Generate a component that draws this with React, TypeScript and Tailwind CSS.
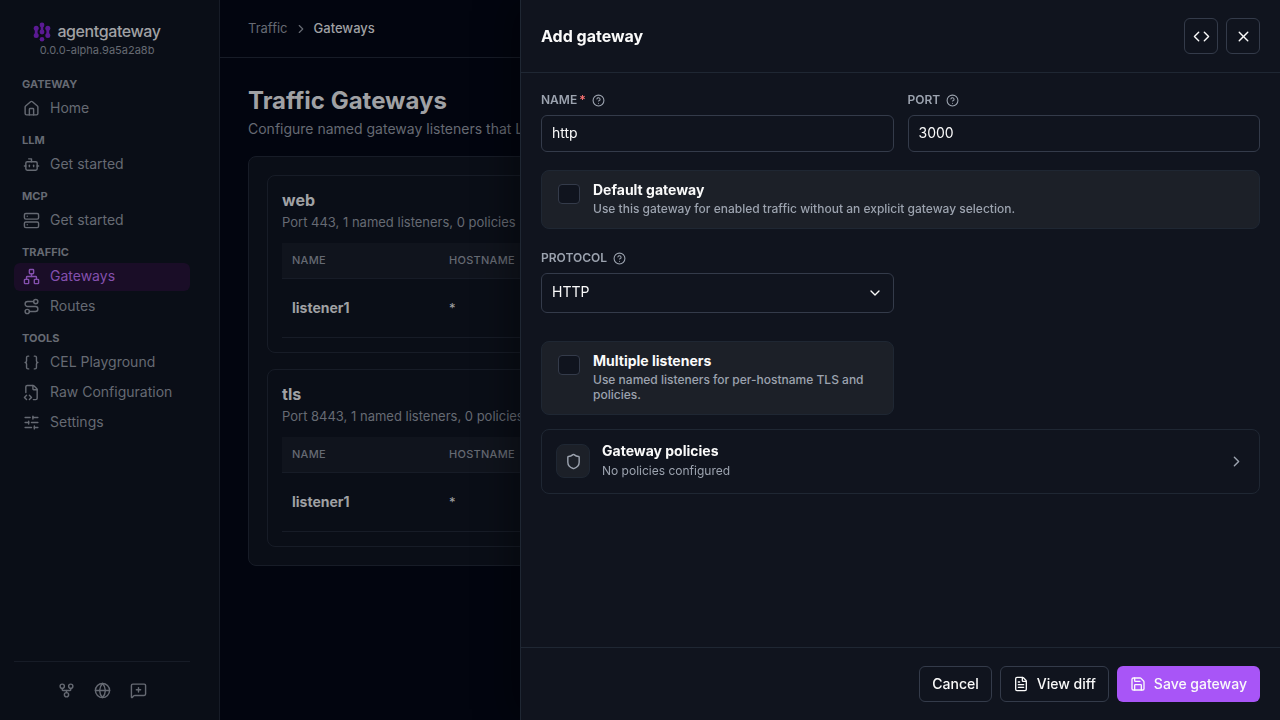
import type { ReactNode } from 'react';
import {
  Bot,
  Braces,
  ChevronDown,
  ChevronRight,
  CircleHelp,
  Code,
  FileCode2,
  FileText,
  GitFork,
  Globe,
  House,
  MessageSquarePlus,
  Network,
  Route,
  Save,
  Server,
  Shield,
  SlidersHorizontal,
  X,
  type LucideIcon,
} from 'lucide-react';

type NavItem = { label: string; icon: LucideIcon; active?: boolean };

const sections: { title: string; items: NavItem[] }[] = [
  { title: 'GATEWAY', items: [{ label: 'Home', icon: House }] },
  { title: 'LLM', items: [{ label: 'Get started', icon: Bot }] },
  { title: 'MCP', items: [{ label: 'Get started', icon: Server }] },
  {
    title: 'TRAFFIC',
    items: [
      { label: 'Gateways', icon: Network, active: true },
      { label: 'Routes', icon: Route },
    ],
  },
  {
    title: 'TOOLS',
    items: [
      { label: 'CEL Playground', icon: Braces },
      { label: 'Raw Configuration', icon: FileCode2 },
      { label: 'Settings', icon: SlidersHorizontal },
    ],
  },
];

const gateways = [
  { name: 'web', summary: 'Port 443, 1 named listeners, 0 policies' },
  { name: 'tls', summary: 'Port 8443, 1 named listeners, 0 policies' },
];

function Logo() {
  return (
    <svg width="18" height="20" viewBox="0 0 18 20" fill="#5b1a94" stroke="#5b1a94" aria-hidden="true">
      <circle cx="3.2" cy="6.2" r="2.5" stroke="none" />
      <circle cx="3.2" cy="13.4" r="2.5" stroke="none" />
      <path d="M3.2 6v7.5" strokeWidth="2.8" />
      <circle cx="9" cy="3" r="2.4" stroke="none" />
      <circle cx="9" cy="10" r="2.4" stroke="none" />
      <path d="M9 3v7" strokeWidth="2.6" />
      <circle cx="14.8" cy="6.2" r="2.5" stroke="none" />
      <circle cx="14.8" cy="13.4" r="2.5" stroke="none" />
      <path d="M14.8 6v7.5" strokeWidth="2.8" />
      <circle cx="9" cy="17.2" r="2.3" stroke="none" />
    </svg>
  );
}

function Sidebar() {
  return (
    <aside className="flex w-[220px] shrink-0 flex-col border-r border-[#171c27] bg-[#0a0e17] pt-5 pr-[29px] pl-3.5">
      <div className="flex flex-col items-center pr-2.5">
        <div className="flex h-6 items-center gap-1.5">
          <Logo />
          <span className="self-start text-base leading-[22px] font-medium tracking-tight text-[#a0a1a4]">
            agentgateway
          </span>
        </div>
        <span className="text-[11px] leading-3 text-[#666a73]">0.0.0-alpha.9a5a2a8b</span>
      </div>
      <nav className="mt-[19px] flex flex-col gap-2">
        {sections.map((section) => (
          <section key={section.title}>
            <h2 className="h-5 px-2 text-[11px] leading-[18px] font-bold text-[#666a73]">{section.title}</h2>
            <div className="flex flex-col gap-0.5">
              {section.items.map((item) => (
                <a
                  key={item.label}
                  href="#"
                  className={
                    item.active
                      ? 'flex h-7 items-center gap-2.5 rounded-md bg-[#1a0d27] px-[9px] pb-0.5 text-sm text-[#8450ae]'
                      : 'flex h-7 items-center gap-2.5 rounded-md px-[9px] pb-0.5 text-sm text-[#666a73]'
                  }
                >
                  <item.icon size={17} />
                  {item.label}
                </a>
              ))}
            </div>
          </section>
        ))}
      </nav>
      <div className="mt-auto flex justify-center gap-[19px] border-t border-[#171c27] pt-5 pb-[21px] text-[#666a73]">
        <a href="#" aria-label="Source"><GitFork size={17} /></a>
        <a href="#" aria-label="Website"><Globe size={17} /></a>
        <a href="#" aria-label="Feedback"><MessageSquarePlus size={17} /></a>
      </div>
    </aside>
  );
}

function GatewayCard({ name, summary }: { name: string; summary: string }) {
  return (
    <article className="rounded-lg border border-[#171c27] p-3.5">
      <h2 className="text-base leading-5 font-bold text-[#a0a1a4]">{name}</h2>
      <p className="mt-0.5 text-[13px] leading-5 text-[#666a73]">{summary}</p>
      <table className="mt-[11px] w-full table-fixed border-separate border-spacing-0 text-left">
        <thead className="bg-[#10141d] text-[11px] tracking-wide text-[#666a73]">
          <tr className="h-9">
            <th className="w-[157px] border-b border-[#171c27] px-2.5 font-medium">NAME</th>
            <th className="border-b border-[#171c27] px-2.5 font-medium">HOSTNAME</th>
          </tr>
        </thead>
        <tbody className="text-sm text-[#a0a1a4]">
          <tr className="h-[59px]">
            <td className="border-b border-[#171c27] px-2.5 font-bold">listener1</td>
            <td className="border-b border-[#171c27] px-2.5 text-[13px]">*</td>
          </tr>
        </tbody>
      </table>
    </article>
  );
}

function FieldLabel({ htmlFor, children, required }: { htmlFor: string; children: string; required?: boolean }) {
  return (
    <div className="flex h-4 items-center gap-1.5 text-[#9ca3af]">
      <label htmlFor={htmlFor} className="text-xs leading-4 font-semibold">
        {children}
        {required && <span className="ml-0.5 text-[#f87171]">*</span>}
      </label>
      <CircleHelp size={13} />
    </div>
  );
}

function CheckCard({ title, children }: { title: string; children: ReactNode }) {
  return (
    <label className="flex items-start gap-[13px] rounded-lg border border-[#1f2733] bg-[#1c2028] px-4 pt-2.5 pb-3">
      <input
        type="checkbox"
        className="mt-[3px] h-5 w-[22px] shrink-0 appearance-none rounded border border-[#343b4a] bg-[#10141e]"
      />
      <span className="flex flex-col gap-0.5">
        <span className="text-sm leading-[18px] font-bold text-[#fafafa]">{title}</span>
        <span className="text-xs leading-[15px] font-medium text-[#9ca3af]">{children}</span>
      </span>
    </label>
  );
}

const outlineButton =
  'flex h-9 items-center justify-center gap-2 rounded-md border border-[#343b4a] text-sm font-medium text-[#fafafa]';
const inputBox = 'w-full rounded-md border border-[#343b4a] bg-[#10141e] px-2.5 text-sm text-[#fafafa]';

function GatewayDrawer() {
  return (
    <div
      role="dialog"
      aria-labelledby="drawer-title"
      className="fixed inset-y-0 right-0 flex w-[760px] max-w-full flex-col border-l border-[#1f2733] bg-[#10141e] shadow-[-12px_0_32px_rgba(0,0,0,0.35)]"
    >
      <header className="flex items-center justify-between border-b border-[#1f2733] px-5 py-[18px]">
        <h2 id="drawer-title" className="text-base font-bold text-[#fafafa]">Add gateway</h2>
        <div className="flex gap-2">
          <button type="button" aria-label="View source" className={`${outlineButton} w-[34px]`}>
            <Code size={17} />
          </button>
          <button type="button" aria-label="Close" className={`${outlineButton} w-[34px]`}>
            <X size={17} />
          </button>
        </div>
      </header>

      <form className="flex-1 overflow-y-auto p-5 pt-[19px]">
        <div className="grid grid-cols-2 gap-x-3.5">
          <div className="flex flex-col gap-[7px]">
            <FieldLabel htmlFor="name" required>NAME</FieldLabel>
            <input id="name" defaultValue="http" className={`${inputBox} h-[37px] pb-0.5`} />
          </div>
          <div className="flex flex-col gap-[7px]">
            <FieldLabel htmlFor="port">PORT</FieldLabel>
            <input id="port" defaultValue="3000" className={`${inputBox} h-[37px] pb-0.5`} />
          </div>
          <div className="col-span-2 mt-[18px]">
            <CheckCard title="Default gateway">
              Use this gateway for enabled traffic without an explicit gateway selection.
            </CheckCard>
          </div>
          <div className="mt-[21px] flex flex-col gap-[7px]">
            <FieldLabel htmlFor="protocol">PROTOCOL</FieldLabel>
            <div className="relative">
              <select id="protocol" className={`${inputBox} h-10 appearance-none pb-0.5`}>
                <option>HTTP</option>
              </select>
              <ChevronDown size={16} className="pointer-events-none absolute top-3 right-[11px] text-[#fafafa]" />
            </div>
          </div>
          <div className="col-start-1 mt-7">
            <CheckCard title="Multiple listeners">Use named listeners for per-hostname TLS and policies.</CheckCard>
          </div>
        </div>
        <button
          type="button"
          className="mt-3.5 flex w-full items-center gap-3 rounded-lg border border-[#1f2733] px-3.5 pt-[11px] pb-3 text-left"
        >
          <span className="flex size-[34px] items-center justify-center rounded-lg border border-[#1f2733] bg-[#1c2028] text-[#9ca3af]">
            <Shield size={17} />
          </span>
          <span className="flex flex-1 flex-col">
            <span className="text-sm leading-5 font-bold text-[#fafafa]">Gateway policies</span>
            <span className="text-xs leading-5 text-[#9ca3af]">No policies configured</span>
          </span>
          <ChevronRight size={17} className="text-[#9ca3af]" />
        </button>
      </form>

      <footer className="flex justify-end gap-2 border-t border-[#1f2733] px-5 py-[18px]">
        <button type="button" className={`${outlineButton} px-3`}>Cancel</button>
        <button type="button" className={`${outlineButton} px-3`}>
          <FileText size={16} />
          View diff
        </button>
        <button
          type="button"
          className="flex h-9 items-center gap-2 rounded-md bg-[#a855f7] px-[13px] text-sm font-medium text-[#fafafa]"
        >
          <Save size={16} />
          Save gateway
        </button>
      </footer>
    </div>
  );
}

export default function App() {
  return (
    <div className="flex min-h-screen bg-[#02050f] font-['Inter','Liberation_Sans',sans-serif]">
      <Sidebar />
      <div className="min-w-0 flex-1">
        <header className="flex h-[58px] items-center gap-1.5 border-b border-[#171c27] px-7 text-[13px]">
          <a href="#" className="text-[#666a73]">Traffic</a>
          <ChevronRight size={14} className="text-[#666a73]" />
          <span className="font-medium text-[#a0a1a4]">Gateways</span>
        </header>
        <main className="p-7">
          <h1 className="text-2xl leading-[30px] font-bold text-[#a0a1a4]">Traffic Gateways</h1>
          <p className="mt-[3px] overflow-hidden text-sm leading-5 text-ellipsis whitespace-nowrap text-[#666a73]">
            Configure named gateway listeners that LLM, MCP, and traffic routes can attach to.
          </p>
          <div className="mt-[17px] flex flex-col gap-4 rounded-lg border border-[#171c27] bg-[#0a0e17] p-[18px]">
            {gateways.map((gateway) => (
              <GatewayCard key={gateway.name} {...gateway} />
            ))}
          </div>
        </main>
      </div>
      <GatewayDrawer />
    </div>
  );
}
